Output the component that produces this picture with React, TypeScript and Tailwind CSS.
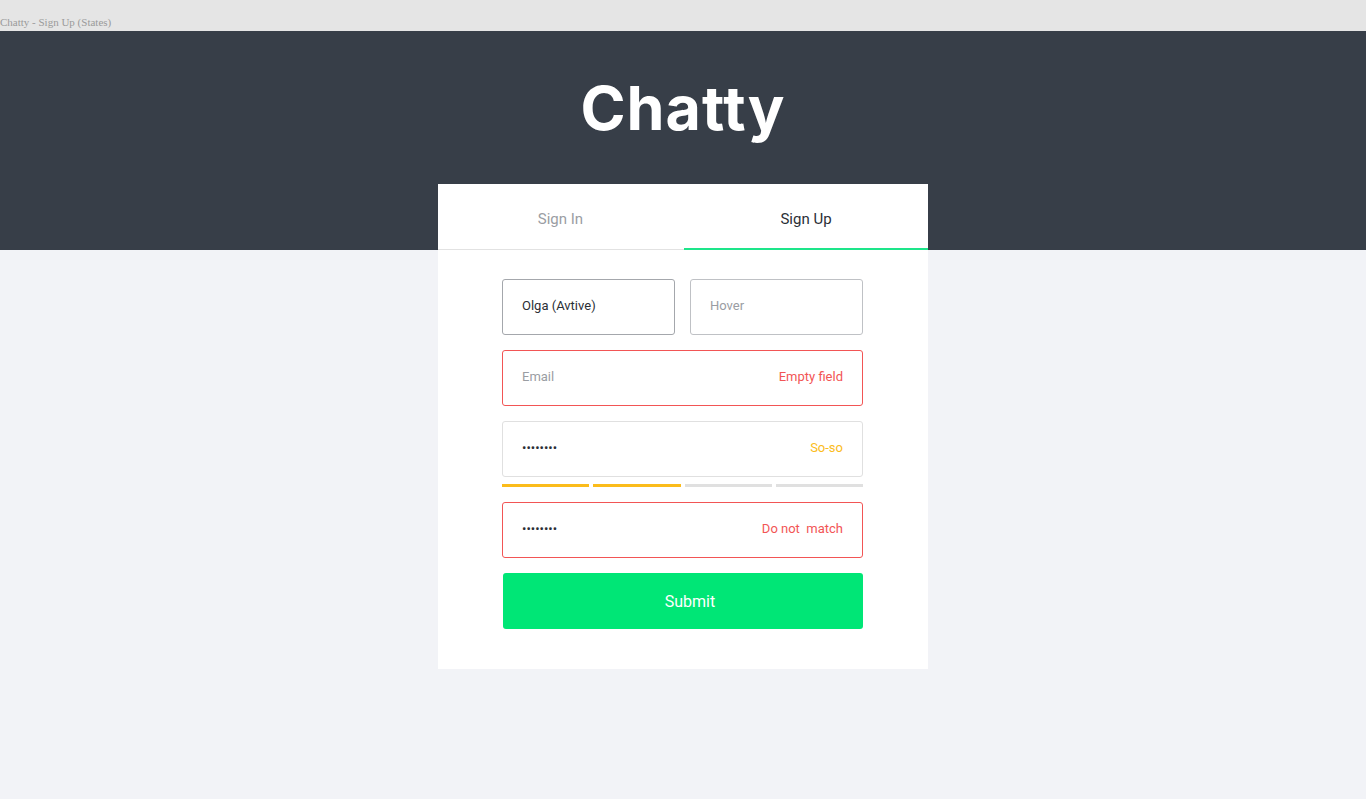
const Field = ({
	value,
	placeholder,
	hint,
	border,
	hintColor,
}: {
	value?: string;
	placeholder?: string;
	hint?: string;
	border: string;
	hintColor?: string;
}) => {
	return (
		<div className={`flex items-center justify-between h-[56px] pl-[19px] pr-[19px] pb-[2px] rounded-[3px] border ${border}`}>
			{value ? (
				<span className="text-[13px] leading-[16px] text-[#2b2f36]">{value}</span>
			) : (
				<span className="text-[13px] leading-[16px] text-[#9a9da3]">{placeholder}</span>
			)}
			{hint && <span className={`text-[13px] leading-[16px] ${hintColor}`}>{hint}</span>}
		</div>
	);
};

const App = () => {
	return (
		<div className="min-h-[799px] bg-[#f2f3f7] font-['Roboto',sans-serif]">
			<div className="h-[31px] bg-[#e5e5e5] pt-[15px]">
				<p className="text-[11px] leading-[14px] text-[#9a9a9a] font-['Liberation_Serif',serif]">
					Chatty - Sign Up (States)
				</p>
			</div>

			<div className="h-[219px] bg-[#373e48] flex flex-col items-center">
				<h1 className="mt-[40px] text-[61px] leading-[74px] font-bold text-white tracking-[1px] font-['Inter','DejaVu_Sans',sans-serif]">
					Chatty
				</h1>
			</div>

			<div className="w-[490px] mx-auto -mt-[66px] bg-white pb-[40px]">
				<div className="grid grid-cols-2 h-[66px] border-b border-[#e2e2e2]">
					<div className="flex items-center justify-center pt-[5px] text-[15px] text-[#9a9da3]">Sign In</div>
					<div className="flex items-center justify-center pt-[7px] ml-px text-[15px] text-[#2b2f36] border-b-2 border-[#1de58a] -mb-px">
						Sign Up
					</div>
				</div>

				<div className="pl-[64px] pr-[65px] pt-[29px]">
					<div className="grid grid-cols-2 gap-[15px]">
						<Field value="Olga (Avtive)" border="border-[#a4a7ac]" />
						<Field placeholder="Hover" border="border-[#bfc1c5]" />
					</div>
					<div className="mt-[15px]">
						<Field placeholder="Email" hint="Empty field" border="border-[#f25555]" hintColor="text-[#f25555]" />
					</div>
					<div className="mt-[15px]">
						<Field value="••••••••" hint="So-so" border="border-[#e0e0e0]" hintColor="text-[#fbbc1b]" />
					</div>
					<div className="grid grid-cols-4 gap-[4px] mt-[7px]">
						<div className="h-[3px] bg-[#fbbc1b]"></div>
						<div className="h-[3px] bg-[#fbbc1b]"></div>
						<div className="h-[3px] bg-[#e0e0e0]"></div>
						<div className="h-[3px] bg-[#e0e0e0]"></div>
					</div>
					<div className="mt-[15px]">
						<Field value="••••••••" hint="Do not  match" border="border-[#f25555]" hintColor="text-[#f25555] whitespace-pre" />
					</div>
					<button className="mt-[15px] ml-px w-[360px] h-[56px] pl-[14px] pt-[2px] rounded-[3px] bg-[#00e676] text-white text-[16px]">
						Submit
					</button>
				</div>
			</div>
		</div>
	);
};

export default App;
